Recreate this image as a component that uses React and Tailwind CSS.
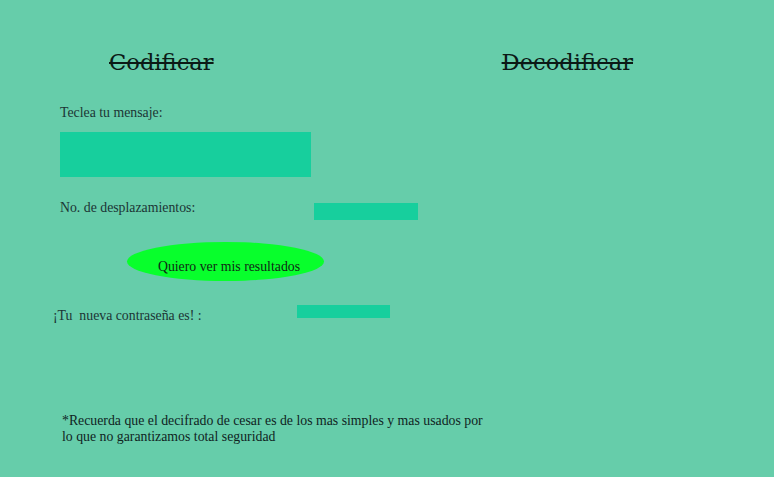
export default function App() {
  return (
    <div className="h-[477px] w-full bg-[#66cdaa] font-['Liberation_Serif',serif] text-[13.8px] leading-4 text-[#1c3535]">
      <div className="flex pt-[48px] pl-[109px] gap-[288px] font-['DejaVu_Serif',serif] text-[22.6px] leading-7 text-[#0b1a16]">
        <h1 className="line-through decoration-[1.5px]">Codificar</h1>
        <h1 className="line-through decoration-[1.5px]">Decodificar</h1>
      </div>

      <div className="pl-[60px]">
        <p className="mt-[29px]">Teclea tu mensaje:</p>
        <input type="text" className="mt-[11px] block h-[45px] w-[251px] bg-[#17cf9d] outline-none" />

        <div className="mt-[23px] flex items-start">
          <label className="w-[254px]">No. de desplazamientos:</label>
          <input type="number" className="mt-[3px] block h-[17px] w-[104px] bg-[#17cf9d] outline-none" />
        </div>

        <button className="ml-[67px] mt-[22px] block h-[39px] w-[197px] rounded-[50%] bg-[#08ff2c] pl-[7px] pt-[10px] text-[13.8px] text-[#0f2a14]">
          Quiero ver mis resultados
        </button>

        <div className="-ml-[7px] mt-[24px] flex items-start">
          <span className="mt-[3px] w-[244px] whitespace-pre">¡Tu  nueva contraseña es! :</span>
          <div className="h-[13px] w-[93px] bg-[#17cf9d]"></div>
        </div>

        <p className="ml-[2px] mt-[89px] text-[#10241f]">
          *Recuerda que el decifrado de cesar es de los mas simples y mas usados por
          <br />
          lo que no garantizamos total seguridad
        </p>
      </div>
    </div>
  );
}
